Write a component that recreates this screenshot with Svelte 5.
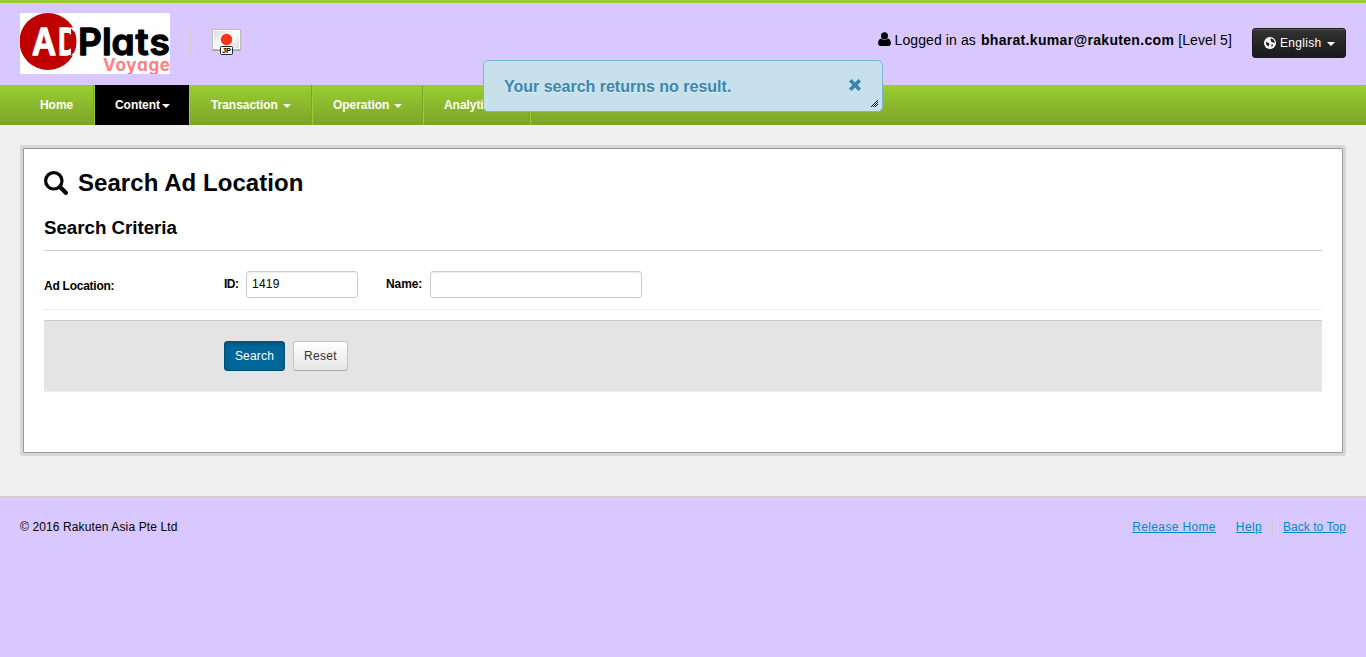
<script>
  let id = $state('1419');
  let name = $state('');
  const menu = [
    { label: 'Home', width: 75, caret: false },
    { label: 'Content', width: 95, caret: true, active: true },
    { label: 'Transaction', width: 123, caret: true },
    { label: 'Operation', width: 111, caret: true },
    { label: 'Analytics', width: 107, caret: true }
  ];
</script>

<div class="page">
  <header>
    <svg class="logo" width="150" height="61" viewBox="0 0 150 61">
      <defs><clipPath id="stem"><rect x="38" y="10" width="13" height="36" /></clipPath></defs>
      <rect width="150" height="61" fill="#fff" />
      <circle cx="28" cy="28.5" r="28.5" fill="#bf0000" />
      <path d="M50 14.500h6v6zM51 42.500h5v-5z" fill="#fff" />
      <text x="12" y="42" class="mark" fill="#fff" stroke="#fff" textLength="24" lengthAdjust="spacingAndGlyphs">A</text>
      <text x="38" y="42" class="mark" fill="#fff" stroke="#fff" textLength="20" lengthAdjust="spacingAndGlyphs" clip-path="url(#stem)">D</text>
      <text x="58 82 91.500 115.500 129.500" y="42" class="mark" fill="#000" stroke="#000">Plats</text>
      <text x="83" y="58" class="sub" fill="#ff8080" textLength="67" lengthAdjust="spacing">Voyage</text>
    </svg>
    <div class="country">
      <svg width="31" height="28" viewBox="0 0 31 28">
        <defs><linearGradient id="cloth" x1="0" y1="0" x2="1" y2="1"><stop offset="0" stop-color="#d8d8d8" /><stop offset=".5" stop-color="#fff" /><stop offset="1" stop-color="#ddd" /></linearGradient></defs>
        <path d="M1 22.500h29" stroke="#a59bbd" stroke-width="1" />
        <rect x="1.5" y="1.5" width="28" height="20" fill="#fff" stroke="#bbb" />
        <rect x="3" y="3" width="25" height="17" fill="url(#cloth)" />
        <circle cx="15.5" cy="11.5" r="5.7" fill="#ff3515" />
        <rect x="9.5" y="18.5" width="12" height="8" rx="1" fill="#fff" stroke="#222" />
        <text x="15.5" y="25.300" text-anchor="middle" class="code">JP</text>
      </svg>
    </div>
    <div class="user">
      <svg width="13" height="14" viewBox="0 0 13 14"><circle cx="6.5" cy="3.7" r="3.5" /><path d="M3.3 6.5C1 7 .1 8.700.1 11.500c0 1.600 1 2.500 2.400 2.500h8c1.400 0 2.400-.9 2.400-2.500 0-2.800-.9-4.500-3.200-5a4.500 4.500 0 0 1-6.400 0z" /></svg>
      <span class="as">Logged in as</span><b>bharat.kumar@rakuten.com</b><span>[Level 5]</span>
    </div>
    <button class="lang">
      <svg width="12" height="12" viewBox="0 0 12 12"><circle cx="6" cy="6" r="6" fill="#fff" /><path d="m7.200 1.300 2.300 1.200 1.300 2.200-.6 1.200-1.300-.2-.7-1-1.200.2.200-1.200-1-.6zM2 4.800l1.200.7 1.400.3 1 1.100-.6 1.200-.7 1.700-1.300-1.200-1-1.800zM7.500 7.200l1.600.3-.6 1.700-1.300.6z" fill="#222" /></svg>
      <span>English</span><i class="caret"></i>
    </button>
  </header>

  <nav>
    {#each menu as item}
      <a href="#top" class:active={item.active} style:width="{item.width}px"><span>{item.label}</span>{#if item.caret}<i class="caret"></i>{/if}</a>
    {/each}
  </nav>

  <main>
    <section class="panel">
      <h1>
        <svg width="24" height="24" viewBox="0 0 24 24" fill="none" stroke="#000"><circle cx="9.800" cy="9.800" r="8.200" stroke-width="3.200" /><path d="m16 16 5.800 5.800" stroke-width="4.300" stroke-linecap="round" /></svg>
        <span>Search Ad Location</span>
      </h1>
      <h2>Search Criteria</h2>
      <div class="criteria">
        <b class="title">Ad Location:</b>
        <label for="loc-id" class="first">ID:</label><input id="loc-id" class="short" bind:value={id} />
        <label for="loc-name" class="second">Name:</label><input id="loc-name" class="long" bind:value={name} />
      </div>
      <div class="actions">
        <button class="primary">Search</button>
        <button>Reset</button>
      </div>
    </section>
  </main>

  <footer>
    <span class="copy">© 2016 Rakuten Asia Pte Ltd</span>
    <div class="links"><a href="#home">Release Home</a><a href="#help">Help</a><div class="top"><a href="#top">Back to Top</a></div></div>
  </footer>

  <div class="toast">
    <span>Your search returns no result.</span>
    <svg class="close" width="14" height="14" viewBox="0 0 14 14"><path d="m2.200 2.200 9.600 9.600m0-9.600-9.600 9.600" stroke="#3a87ad" stroke-width="3.700" /></svg>
    <svg class="grip" width="8" height="8" viewBox="0 0 8 8" shape-rendering="crispEdges"><path d="M0 7h1v1H0zM1 6h1v1H1zM2 5h1v1H2zM3 4h1v1H3zM4 3h1v1H4zM5 2h1v1H5zM6 1h1v1H6zM2 7h1v1H2zM3 6h1v1H3zM4 5h1v1H4zM5 4h1v1H5zM6 3h1v1H6zM4 7h1v1H4zM5 6h1v1H5zM6 5h1v1H6z" fill="#112" /></svg>
  </div>
</div>

<style>
  :global(body) { background: #d9c8ff; }
  .page { position: relative; font: 12px/20px "Liberation Sans", Arial, sans-serif; color: #000; }
  header { box-sizing: border-box; height: 85px; border-top: 3px solid #9acd32; background: #d9c8ff; display: flex; align-items: flex-start; padding: 10px 20px 0; }
  .logo { flex: none; }
  .mark { font: 600 37px Inter, sans-serif; font-feature-settings: "cv11"; stroke-width: 1.3; stroke-linejoin: round; }
  .sub { font: 700 17px Inter, sans-serif; font-feature-settings: "cv11"; }
  .code { font: 700 7.5px "Liberation Sans", sans-serif; }
  .country { margin: 15px 0 0 20px; border-left: 1px solid #ccc; padding-left: 20px; height: 28px; }
  .country svg { display: block; }
  .user { margin: 17px 20px 0 auto; font-size: 14px; display: flex; align-items: center; white-space: pre; }
  .user svg { margin: -3px 4px 0 0; }
  .as { letter-spacing: .1px; }
  .user b { margin: 0 4px 0 5px; letter-spacing: .32px; }
  .user b + span { letter-spacing: .1px; }
  button { font: 12px/20px "Liberation Sans", Arial, sans-serif; box-sizing: border-box; height: 30px; border-radius: 3px; }
  .lang { margin-top: 15px; width: 94px; padding: 0 0 0 11px; display: flex; align-items: center; color: #fff; border: 1px solid #1c1c1c; background: linear-gradient(#333, #1a1a1a); box-shadow: inset 0 1px #555; }
  .lang span { margin-left: 4px; letter-spacing: .3px; }
  .lang .caret { margin: 2px 0 0 6px; }
  .caret { display: inline-block; width: 0; height: 0; border: 4px solid transparent; border-top-color: #fff; border-bottom: 0; }
  nav { height: 40px; padding-left: 20px; display: flex; background: linear-gradient(#9acd32, #7ba428); }
  nav a { box-sizing: border-box; padding-left: 20px; color: #fff; font-weight: 700; line-height: 40px; text-decoration: none; border-right: 1px solid #9acd32; box-shadow: inset -1px 0 #7ba428; display: flex; align-items: center; letter-spacing: -.05px; }
  nav .caret { margin: 2px 0 0 5px; }
  nav a:nth-child(3) { padding-left: 21px; }
  nav a.active { background: #000; background-clip: padding-box; box-shadow: none; }
  nav .active .caret { margin-left: 2px; }
  main { height: 372px; box-sizing: border-box; padding: 23px 23px 0; background: #f0f0f0; border-bottom: 1px solid #ccc; }
  .panel { box-sizing: border-box; height: 305px; padding: 0 20px; background: #fff; border: 1px solid #999; border-radius: 1px; box-shadow: 0 0 0 3px #d7d7d7; }
  h1 { margin: 0; padding-top: 18px; height: 32px; display: flex; align-items: center; gap: 10px; font-size: 24px; line-height: 32px; letter-spacing: .05px; }
  h2 { margin: 0; padding-top: 19px; height: 32px; font-size: 18.7px; line-height: 20px; border-bottom: 1px solid #ccc; }
  .criteria { box-sizing: border-box; height: 59px; display: flex; padding-top: 20px; border-bottom: 1px solid #eee; font-weight: 700; }
  .title { width: 180px; margin-top: 5px; letter-spacing: -.25px; }
  label { box-sizing: border-box; margin-top: 3px; }
  .first { width: 22px; letter-spacing: -.5px; }
  .second { width: 44px; margin-left: 28px; letter-spacing: -.1px; }
  input { box-sizing: border-box; height: 27px; padding: 0 5px 2px; border: 1px solid #ccc; border-radius: 3px; box-shadow: inset 0 1px 1px #00000013; font: 12px "Liberation Sans", sans-serif; letter-spacing: .25px; color: #000; }
  .short { width: 112px; }
  .long { width: 212px; }
  .actions { box-sizing: border-box; height: 72px; margin-top: 10px; padding: 20px 0 0 180px; display: flex; gap: 8px; background: #e4e4e4; border-top: 1px solid #ccc; border-bottom: 1px solid #eee; }
  .actions button { width: 55px; padding: 0; color: #333; letter-spacing: .3px; border: 1px solid #c5c5c5; border-bottom-color: #aaa; background: linear-gradient(#fff, #e6e6e6); }
  .actions .primary { width: 61px; color: #fff; letter-spacing: .2px; border-color: #00507a; background: #069; box-shadow: inset 0 2px 4px #0003; }
  footer { padding: 20px 20px 0; display: flex; justify-content: space-between; }
  .copy { letter-spacing: .12px; }
  .links { display: flex; letter-spacing: .35px; }
  .links a { color: #0088cc; margin-left: 20px; }
  .links .top { margin-left: 10px; padding-left: 10px; border-left: 1px solid #ccc; letter-spacing: .05px; }
  .links .top a { margin: 0; }
  .toast { position: absolute; left: 483px; top: 60px; box-sizing: border-box; width: 400px; height: 52px; padding: 1px 20px 0 20px; display: flex; align-items: center; justify-content: space-between; font-size: 16px; font-weight: 700; color: #3a87ad; background: #c8e0ec; border: 1px solid #75b5d6; border-radius: 5px; text-shadow: 0 1px #ffffff80; }
  .close { margin-top: -3px; }
  .grip { position: absolute; right: 3px; bottom: 4px; }
</style>
